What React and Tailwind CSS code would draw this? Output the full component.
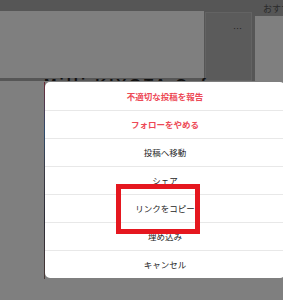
const ITEMS = [
  { label: "不適切な投稿を報告", danger: true },
  { label: "フォローをやめる", danger: true },
  { label: "投稿へ移動" },
  { label: "シェア" },
  { label: "リンクをコピー" },
  { label: "埋め込み" },
  { label: "キャンセル" },
];

const jp = { fontFamily: '"Noto Sans CJK JP", "Noto Sans", sans-serif' };

export default function App() {
  return (
    <div className="relative w-[283px] h-[300px] overflow-hidden bg-[#7f7f7f]" style={jp}>
      {/* dimmed page behind the sheet */}
      <div className="flex h-[81px] bg-[#565656]">
        <div className="shrink-0 mt-[11px] w-[204px] h-[67px] bg-[#7f7f7f]" />
        <div className="shrink-0 ml-[1px] mt-[12px] w-[47px] h-[69px] bg-[#5b5b5b] border border-[#636363] flex justify-end pr-[9px] pt-[12px]">
          <span className="text-[9px] leading-[8px] text-[#222]">…</span>
        </div>
        <div className="ml-[3px] flex-1 min-w-0 overflow-hidden flex flex-col">
          <div className="pl-[8px] pt-[3px] h-[16px] text-[9px] leading-[12px] text-[#2a2a2a] whitespace-nowrap">おすすめ</div>
          <div className="h-[66px] bg-[#7f7f7f]" />
        </div>
      </div>
      <div className="pl-[44px] -mt-[3px] h-[3px] overflow-hidden">
        <div className="-mt-[4px] text-[15px] font-bold leading-[20px] tracking-[3px] text-[#111] whitespace-nowrap" style={{ fontFamily: '"Liberation Sans", sans-serif' }}>
          Milli KIYOTA Cafe
        </div>
      </div>

      {/* action sheet */}
      <div className="absolute left-[44px] top-[82px] w-[1px] h-[197px] bg-[linear-gradient(#6b2a35,#2f4c6e_25%,#3a3a44_45%,#2a2a35_70%,#4a3a38)]" />
      <div className="absolute left-[45px] top-[82px] w-[240px] rounded-[5px] bg-white overflow-hidden">
        {ITEMS.map((it, i) => (
          <div
            key={it.label}
            className={`h-[28px] flex items-center justify-center text-[8.5px] ${i > 0 ? "border-t border-[#e8e8e8]" : ""} ${it.danger ? "text-[#ed4956] font-bold" : "text-[#262626]"}`}
          >
            {it.label}
          </div>
        ))}
      </div>

      {/* highlight annotation */}
      <div className="absolute left-[116px] top-[184px] w-[84px] h-[50px] border-[5px] border-[#e5171f]" />
    </div>
  );
}
